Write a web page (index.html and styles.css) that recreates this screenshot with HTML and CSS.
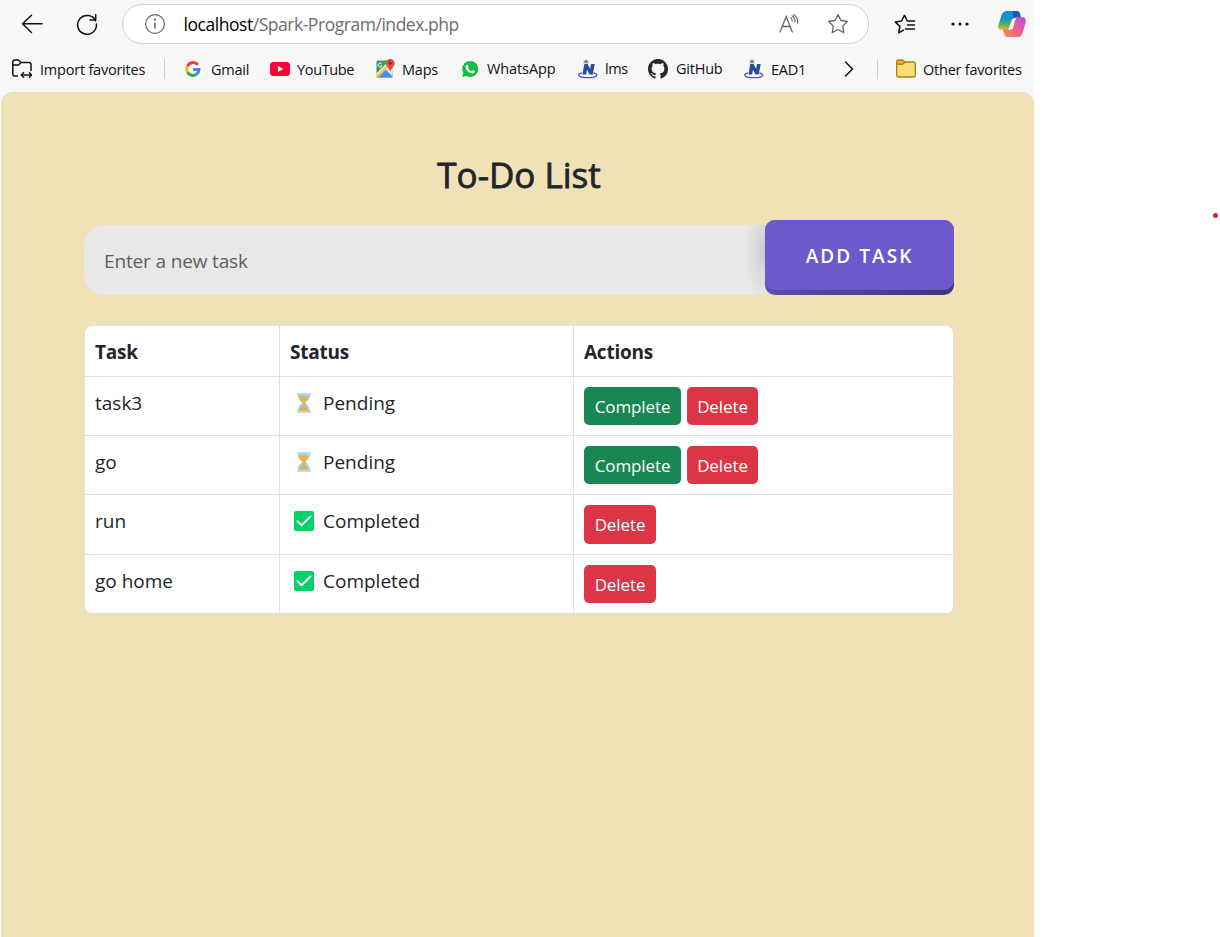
FILE: index.html
```html
<!DOCTYPE html>
<html lang="en">
<head>
<meta charset="utf-8">
<title>To-Do List</title>
<link rel="stylesheet" href="styles.css">
</head>
<body>
<svg class="defs" width="0" height="0">
  <defs>
    <linearGradient id="cpBlue" x1="0" y1="0" x2="0" y2="1"><stop offset="0" stop-color="#0a8fe6"/><stop offset=".4" stop-color="#1691c8"/><stop offset=".7" stop-color="#56b357"/><stop offset="1" stop-color="#e9c321"/></linearGradient>
    <linearGradient id="cpPink" x1="1" y1="0" x2="0" y2="1"><stop offset="0" stop-color="#a551ee"/><stop offset=".45" stop-color="#ee589b"/><stop offset="1" stop-color="#ff9348"/></linearGradient>
    <symbol id="hourglass" viewBox="0 0 20 20">
      <path d="M4 2h12c0 4-2 6-4.500 8 2.500 2 4.500 4 4.500 8H4c0-4 2-6 4.500-8C6 8 4 6 4 2z" fill="#8fcdf8"/>
      <path d="M14 3.500c0 2-1 4-2.500 5M13 11.500c1.500 1 2.500 3 2.500 5" fill="none" stroke="#e4f3fd" stroke-width="1.300"/>
      <path d="M4.500 4h10c-.5 2.500-2 4.200-3.800 5.300v4.200c1.800.8 3.200 2 3.600 4H5.500c.4-2 2-3.200 3.800-4V9.300C7 8.200 5 6.500 4.500 4z" fill="#ffac2c"/>
      <path d="M3 0h14v2H3zM3 18h14v2H3z" fill="#cfd5dc"/>
    </symbol>
    <symbol id="done" viewBox="0 0 20 20">
      <rect width="20" height="20" rx="2" fill="#00d26a"/>
      <path d="M3.500 10.200 7.600 14.300 16.400 5.500" fill="none" stroke="#f4f4f4" stroke-width="2" stroke-linecap="round" stroke-linejoin="round"/>
    </symbol>
    <symbol id="campus" viewBox="0 0 20 20">
      <path d="M3.800 14C.5 14.700.2 16 1.500 17.200c2.300 1.900 14 1.900 16.600 0 1.500-1.200.5-2.600-2.600-3.200" fill="none" stroke="#5553b4" stroke-width="1.300"/>
      <path d="M6.300 5h3.400l2.400 5 .9-5h3.700l-2 10.500h-3.200L9 10.800l-.9 4.700H4.400z" fill="#264e98"/>
      <path d="M8 .5v4M5.500 2.200h5M6 4.300l2-2 2 2" fill="none" stroke="#626b74" stroke-width="1"/>
    </symbol>
  </defs>
</svg>
<div class="browser">
  <header class="toolbar">
    <svg class="ic back" viewBox="0 0 22 20" width="22" height="20"><path d="M21 9.700H1.500M10.500 1.200 1.500 9.700l9 8.800" fill="none" stroke="#111" stroke-width="1.500" stroke-linecap="round" stroke-linejoin="round"/></svg>
    <svg class="ic reload" viewBox="0 0 22 22" width="22" height="22"><path d="M19.600 8A9.400 9.400 0 1 0 20.400 11M19.700 1.800V7h-5.700" fill="none" stroke="#111" stroke-width="1.500" stroke-linecap="round" stroke-linejoin="round"/></svg>
    <div class="address">
      <svg class="ic" viewBox="0 0 22 22" width="22" height="22"><circle cx="11" cy="11" r="9.400" fill="none" stroke="#666" stroke-width="1.200"/><path d="M11 9.500v6" stroke="#666" stroke-width="1.600"/><circle cx="11" cy="6.700" r="1.100" fill="#666"/></svg>
      <span class="url"><span class="host">localhost</span>/Spark-Program/index.php</span>
      <svg class="ic read" viewBox="0 0 20 20" width="20" height="20"><path d="M1 18 7.200 2.500 13.300 18M3.200 12.500h8" fill="none" stroke="#666" stroke-width="1.300" stroke-linecap="round"/><path d="M11.500 3.500c1.300.8 1.800 2 1.700 3.500M13 1.700c2.400 1.500 3.200 3.800 2.800 6.300M14.700.5c3.200 2 4.400 5.500 3.800 8.800" fill="none" stroke="#666" stroke-width="1.100" stroke-linecap="round"/></svg>
      <svg class="ic" viewBox="0 0 22 22" width="22" height="22"><path d="M11 1.600l2.900 5.900 6.500 1-4.700 4.600 1.100 6.500-5.800-3.100-5.800 3.100 1.100-6.500L1.600 8.500l6.500-1z" fill="none" stroke="#666" stroke-width="1.300" stroke-linejoin="round"/></svg>
    </div>
    <svg class="ic favs" viewBox="0 0 22 20" width="22" height="20"><path d="M13 6.500 10.500 1.200 7.600 7l-6.400.9 4.700 4.500-1.200 6.400 4.800-2.600M13.500 7h7M13.500 11h7M11.500 15h9" fill="none" stroke="#111" stroke-width="1.500" stroke-linecap="round" stroke-linejoin="round"/></svg>
    <svg class="ic more" viewBox="0 0 18 4" width="18" height="4"><g fill="#111"><circle cx="2" cy="2" r="1.600"/><circle cx="9" cy="2" r="1.600"/><circle cx="16" cy="2" r="1.600"/></g></svg>
    <svg class="ic copilot" viewBox="0 0 28 26" width="28" height="26">
      <path d="M8.500 0h10c2 0 2.800 1 3.300 2.700l.9 2.800h-4.500c-2 0-2.700 1-3.200 2.500l-3 8.500c-.6 1.500-1.500 2.500-3.500 2.500H4c-3.200 0-4.500-2-3.500-5.500L3.500 4.500C4.500 1.500 6 0 8.500 0z" fill="url(#cpBlue)"/>
      <path d="M14.500 0h4c2 0 2.800 1 3.300 2.700l1.400 4.300h-5c-1.500 0-2.300.6-2.800 1.500z" fill="#1857bd"/>
      <path d="M19.500 26h-10c-2 0-2.800-1-3.300-2.700L4.800 18h3.700c2 0 2.900-1 3.500-2.500l3-7c.5-1.500 1.200-2.500 3.200-2.500H24c3.200 0 4.500 2.500 3.500 6l-3 10c-1 3-2.500 4.500-5 4.500z" fill="url(#cpPink)"/>
      <path d="M18.500 7c-3.300 0-4.300.8-5 2.700l-2.400 6.800c-.3 1-.8 1.900-1.500 2.500 3.300 0 4.900-.4 5.600-2.700l1.900-6.500c.3-1.200.6-2.300 1.400-2.800z" fill="#f7f7f7"/>
    </svg>
  </header>
  <nav class="bookmarks">
    <a class="bm import"><svg viewBox="0 0 20 20" width="20" height="20"><path d="M6 17H2.500Q0.800 17 .8 15.300V3Q.8 1 2.700 1h3.600l2.700 2.500h8Q19 3.500 19 5.500V12M1 6h5.500L9 3.500" fill="none" stroke="#111" stroke-width="1.500"/><path d="M9.500 16h10M12 13.200 9.200 16l2.800 2.800M17 13.200l2.800 2.800-2.800 2.800" fill="none" stroke="#111" stroke-width="1.400"/></svg><span>Import favorites</span></a>
    <i class="sep"></i>
    <a class="bm gmail"><svg viewBox="0 0 20 20" width="20" height="20"><circle cx="9.500" cy="10" r="9.500" fill="#fff"/><g transform="translate(-.5 .7)" fill="none" stroke-width="3"><path d="M14.600 5.100A6.200 6.200 0 0 0 4 6.500" stroke="#ea4335"/><path d="M4 6.500a6.200 6.200 0 0 0 0 6" stroke="#fbbc05"/><path d="M4 12.500a6.200 6.200 0 0 0 9.300 1.800" stroke="#34a853"/><path d="M13.300 14.300c1.400-1.100 2.200-2.800 2.200-4.600H9.500" stroke="#4285f4"/></g></svg><span>Gmail</span></a>
    <a class="bm youtube"><svg viewBox="0 0 20 20" width="20" height="20"><rect y="3" width="20" height="14" rx="3.500" fill="#ff0033"/><path d="M8 7v6l5.200-3z" fill="#fff"/></svg><span>YouTube</span></a>
    <a class="bm maps"><svg viewBox="0 0 20 20" width="20" height="20"><rect x="1.500" y="1.500" width="16" height="17" rx="1.500" fill="#3b9a5c"/><path d="M1.500 18 10 9l7.500 8v1.500h-16z" fill="#4c8df5"/><path d="M1.500 14.500 12 4l2 2.500L2.500 18.500h-1z" fill="#fff"/><path d="M1.500 16.300 12.500 5.500l1.500 2L3 18.500H1.500z" fill="#fbc02d"/><path d="m10 10 7.500 7.300V6L12 8.500z" fill="#e5e9ef"/><path d="M6.800 5A2 2 0 1 0 7 6.800H5.400" fill="none" stroke="#fff" stroke-width="1"/><path d="M15.300 0a4.300 4.300 0 0 1 4.300 4.300c0 3.300-3.300 4.300-4.300 8.700-1-4.400-4.300-5.400-4.300-8.700A4.300 4.300 0 0 1 15.300 0z" fill="#dd4b3e"/><circle cx="15.300" cy="4.300" r="1.500" fill="#822f2b"/></svg><span>Maps</span></a>
    <a class="bm whatsapp up"><svg viewBox="0 0 20 20" width="20" height="20"><path d="M.5 19.500 2 14.500A9.200 9.200 0 1 1 6 18z" fill="#fff"/><circle cx="10.200" cy="10" r="8" fill="#12c143"/><path d="m2.200 18.200 1.300-5 3.400 3.600z" fill="#12c143"/><path d="M7 5.700c.8-.3 1.100.3 1.700 1.900.2.600-.8 1.200-.6 1.600.8 1.500 1.900 2.300 3.200 2.900.5.200.9-1.100 1.500-.9 1.600.7 2.200.9 2 1.500-.4 1.500-1.800 2-3.200 1.600-3-.8-5.500-3.300-6-5.400-.3-1.400.5-2.700 1.400-3.200z" fill="#fff"/></svg><span>WhatsApp</span></a>
    <a class="bm lms up"><svg width="20" height="20"><use href="#campus"/></svg><span>lms</span></a>
    <a class="bm github up"><svg viewBox="0 0 16 16" width="20" height="20"><path fill="#24292f" d="M8 0C3.580 0 0 3.580 0 8c0 3.540 2.290 6.530 5.470 7.590.4.070.55-.17.55-.38 0-.19-.01-.82-.01-1.490-2.010.37-2.530-.49-2.690-.94-.09-.23-.48-.94-.82-1.130-.28-.15-.68-.52-.01-.53.63-.01 1.080.58 1.230.82.72 1.210 1.870.87 2.330.66.07-.52.28-.87.51-1.070-1.780-.2-3.640-.89-3.640-3.950 0-.87.31-1.590.82-2.150-.08-.2-.36-1.020.08-2.120 0 0 .67-.21 2.200.82.640-.18 1.320-.27 2-.27s1.360.09 2 .27c1.530-1.040 2.200-.82 2.200-.82.440 1.100.16 1.920.08 2.120.51.56.82 1.270.82 2.150 0 3.070-1.870 3.750-3.650 3.950.29.25.54.73.54 1.480 0 1.070-.01 1.930-.01 2.200 0 .21.15.46.55.38A8.010 8.010 0 0 0 16 8c0-4.420-3.580-8-8-8z"/></svg><span>GitHub</span></a>
    <a class="bm ead"><svg width="20" height="20"><use href="#campus"/></svg><span>EAD1</span></a>
    <svg class="chev" viewBox="0 0 10 16" width="10" height="16"><path d="m1.500 1 7 7-7 7" fill="none" stroke="#111" stroke-width="1.500" stroke-linecap="round"/></svg>
    <i class="sep"></i>
    <a class="bm other"><svg viewBox="0 0 20 20" width="20" height="20"><path d="M.7 4V16q0 2 2 2h14.600q2 0 2-2V5q0-2-2-2H9z" fill="#ffdb7c" stroke="#ad7d0b" stroke-width="1.300"/><path d="M.7 5V3q0-2 2-2H6.500L9 3 6.500 5.300z" fill="#edb720" stroke="#ad7d0b" stroke-width="1.300" stroke-linejoin="round"/></svg><span>Other favorites</span></a>
  </nav>
  <main class="page">
    <h1>To-Do List</h1>
    <form class="entry">
      <div class="field">Enter a new task</div>
      <button class="add" type="button">ADD TASK</button>
    </form>
    <div class="tasks">
      <div class="row head"><div class="cell">Task</div><div class="cell">Status</div><div class="cell">Actions</div></div>
      <div class="row"><div class="cell">task3</div><div class="cell status"><svg width="20" height="20"><use href="#hourglass"/></svg><span class="pending">Pending</span></div><div class="cell actions"><button class="btn ok">Complete</button><button class="btn del">Delete</button></div></div>
      <div class="row"><div class="cell">go</div><div class="cell status"><svg width="20" height="20"><use href="#hourglass"/></svg><span class="pending">Pending</span></div><div class="cell actions"><button class="btn ok">Complete</button><button class="btn del">Delete</button></div></div>
      <div class="row tall"><div class="cell">run</div><div class="cell status"><svg width="20" height="20"><use href="#done"/></svg><span>Completed</span></div><div class="cell actions"><button class="btn del">Delete</button></div></div>
      <div class="row last"><div class="cell">go home</div><div class="cell status"><svg width="20" height="20"><use href="#done"/></svg><span>Completed</span></div><div class="cell actions"><button class="btn del">Delete</button></div></div>
    </div>
  </main>
</div>
<span class="dot"></span>
</body>
</html>
```
FILE: styles.css
```css
* { box-sizing: border-box; }
body { margin: 0; height: 937px; overflow: hidden; background: #fff; display: flex; font-family: "Open Sans", "Noto Sans", sans-serif; color: #212529; }
.defs { position: absolute; }
svg { display: block; flex: none; }
.browser { width: 1034px; height: 937px; background: #f7f7f7; display: flex; flex-direction: column; }

.toolbar { height: 48px; display: flex; align-items: center; padding-left: 21px; }
.reload { margin-left: 33px; }
.address { margin-left: 24px; width: 747px; height: 40px; border: 1px solid #d0d0d0; border-radius: 20px; background: #fff; display: flex; align-items: center; padding: 0 19px 0 21px; }
.url { margin-left: 17.500px; padding-bottom: 1px; flex: 1; font-size: 17.500px; color: #6d6d6d; letter-spacing: -.46px; white-space: nowrap; }
.host { color: #000; }
.read { margin-right: 28px; }
.favs { margin-left: 25px; }
.more { margin-left: 35px; }
.copilot { margin-left: 29px; }

.bookmarks { height: 44px; display: flex; align-items: center; padding: 0 0 2px 12px; }
.bm { display: flex; align-items: center; gap: 7px; font-size: 14.500px; color: #111; letter-spacing: -.22px; white-space: nowrap; flex: none; line-height: 20px; }
.bm span { padding-top: 2px; }
.up span { padding-top: 0; }
.sep { width: 1px; height: 20px; background: #cfcfcf; flex: none; }
.import { width: 152px; gap: 8px; }
.gmail { margin-left: 19px; width: 86px; }
.youtube { width: 105px; letter-spacing: -.35px; }
.maps { width: 85px; }
.whatsapp { width: 118px; letter-spacing: -.1px; }
.lms { width: 70px; letter-spacing: -.4px; }
.github { width: 96px; gap: 8px; }
.ead { width: 100px; }
.chev { margin-right: 23px; }
.other { margin-left: 18px; }

.page { flex: 1; margin-left: 1px; background: #f0e1b6; border: 1px solid #e6dfcb; border-width: 1px 0 0 1px; border-radius: 12px 12px 0 0; padding: 60px 80px 0 82px; }
h1 { margin: 0; height: 44px; line-height: 44px; font-size: 35px; font-weight: 400; text-align: center; -webkit-text-stroke: .8px #212529; }
.entry { display: flex; align-items: flex-end; height: 75px; margin-top: 23px; }
.field { width: 682px; height: 70px; border-radius: 20px 0 0 20px; background: radial-gradient(ellipse 22px 52px at 100% 38%, #c4c4c7, #dadadb 45%, #e8e8e8) #e8e8e8; padding-left: 20px; line-height: 73px; font-size: 19px; letter-spacing: -.15px; color: #5b5f63; }
.add { position: relative; isolation: isolate; width: 189px; height: 75px; margin-left: -1px; border: 0; border-radius: 10px; background: linear-gradient(90deg, #5d4eb4, #3e3478); color: #fff; font: 600 19px/70px "Open Sans", sans-serif; letter-spacing: 2.050px; padding: 0 0 3px; }
.add::before { content: ""; position: absolute; inset: 0 0 5px; border-radius: 10px; background: #6a5acb; z-index: -1; }

.tasks { width: 870px; margin: 30px 0 0; border: 1px solid #dee2e6; border-radius: 8px; overflow: hidden; background: #fff; font-size: 19px; }
.row { display: grid; grid-template-columns: 195px 294px 1fr; height: 59px; border-bottom: 1px solid #dee2e6; }
.head { height: 51px; font-weight: 700; letter-spacing: -.25px; }
.tall { height: 60px; }
.last { height: 58px; border-bottom: 0; }
.cell { padding: 11px 10px 0; line-height: 30px; border-right: 1px solid #dee2e6; }
.cell:last-child { border-right: 0; }
.status { display: flex; gap: 9px; padding-left: 14px; }
.status svg { margin-top: 5px; }
.actions { display: flex; gap: 6px; padding-top: 10px; }
.btn { height: 38px; border: 0; border-radius: 5px; color: #fff; font: 17px/38px "Open Sans", sans-serif; padding: 1px 0 0; text-align: center; letter-spacing: -.1px; }
.tall .btn { height: 39px; }
.ok { width: 97px; background: #198754; }
.del { width: 71px; background: #dc3545; }
.tall .del, .last .del { width: 72px; }

.dot { width: 5px; height: 5px; border-radius: 50%; background: #ec1c24; margin: 213px 0 0 179px; }
```
